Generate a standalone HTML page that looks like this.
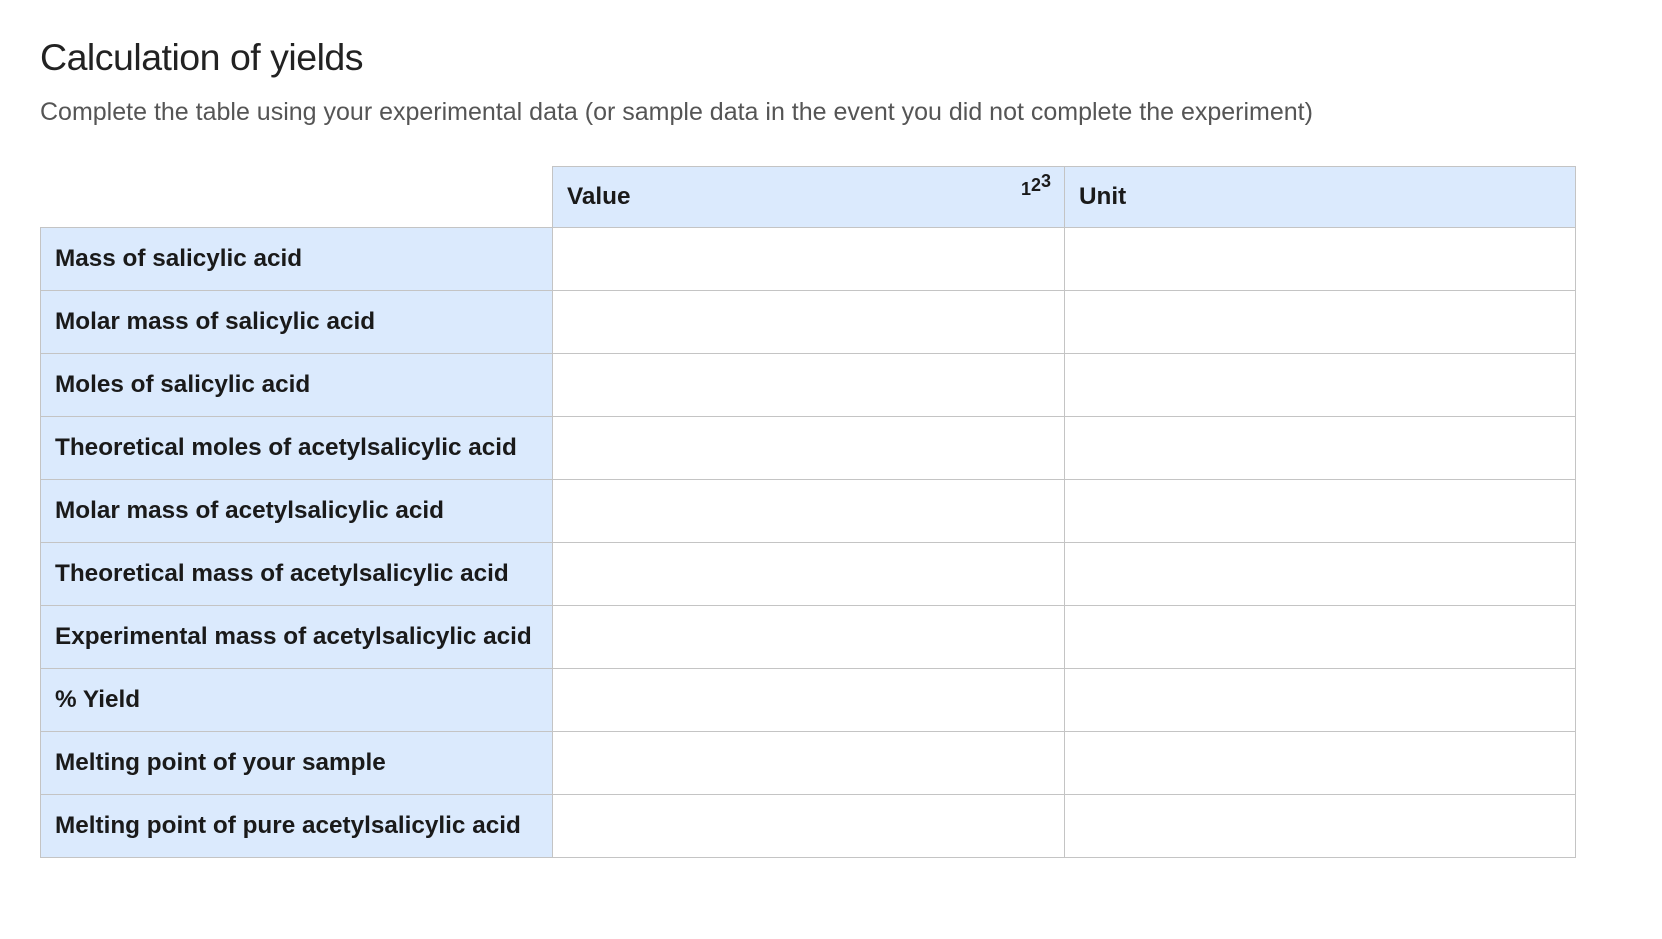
<!DOCTYPE html>
<html><head><meta charset="utf-8"><style>
html,body{margin:0;padding:0;background:#fff;width:1662px;height:939px;overflow:hidden;font-family:"Liberation Sans",sans-serif}
h1{position:absolute;left:40px;top:36px;margin:0;font-weight:normal;font-size:37.5px;color:#222;letter-spacing:-0.5px}
p{position:absolute;left:40px;top:98px;margin:0;font-size:25px;color:#555;letter-spacing:0px}
table{position:absolute;left:40px;top:166px;border-collapse:collapse;table-layout:fixed;width:1535px}
td{border:1px solid #c4c4c4;height:63px;padding:0 0 0 14px;font-weight:bold;font-size:24.3px;color:#1a1a1a;box-sizing:border-box}
td.l{background:#dbeafd}
tr.h td{height:61px;background:#dbeafd}
td.e{border:none;background:#fff}
.sup{float:right;margin-right:13px;font-size:18px;margin-top:-4px}
.sup span{position:relative;top:-4px}
</style></head><body>
<h1>Calculation of yields</h1>
<p>Complete the table using your experimental data (or sample data in the event you did not complete the experiment)</p>
<table>
<colgroup><col style="width:512px"><col style="width:512px"><col style="width:511px"></colgroup>
<tr class="h"><td class="e" style="background:#fff;border-top:none;border-left:none"></td><td>Value<span class="sup">1<span>2</span><span style="top:-8px">3</span></span></td><td>Unit</td></tr>
<tr><td class="l">Mass of salicylic acid</td><td></td><td></td></tr>
<tr><td class="l">Molar mass of salicylic acid</td><td></td><td></td></tr>
<tr><td class="l">Moles of salicylic acid</td><td></td><td></td></tr>
<tr><td class="l">Theoretical moles of acetylsalicylic acid</td><td></td><td></td></tr>
<tr><td class="l">Molar mass of acetylsalicylic acid</td><td></td><td></td></tr>
<tr><td class="l">Theoretical mass of acetylsalicylic acid</td><td></td><td></td></tr>
<tr><td class="l">Experimental mass of acetylsalicylic acid</td><td></td><td></td></tr>
<tr><td class="l">% Yield</td><td></td><td></td></tr>
<tr><td class="l">Melting point of your sample</td><td></td><td></td></tr>
<tr><td class="l">Melting point of pure acetylsalicylic acid</td><td></td><td></td></tr>
</table>
</body></html>
